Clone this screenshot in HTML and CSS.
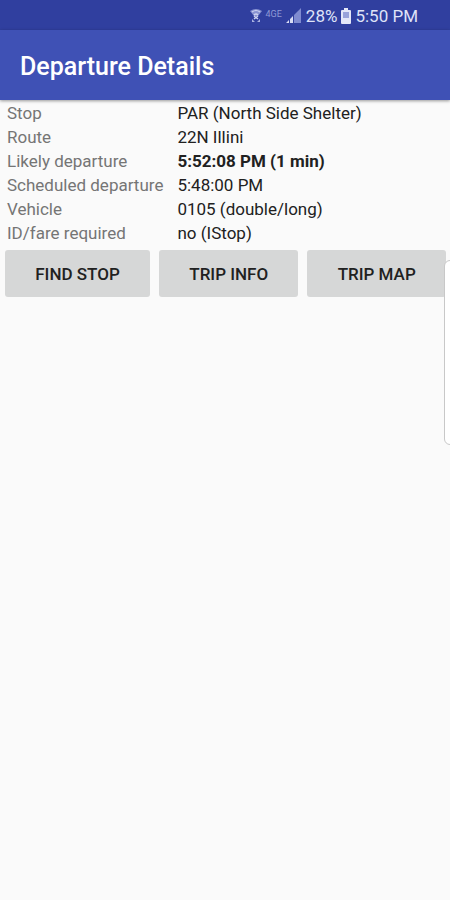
FILE: index.html
```
<!DOCTYPE html>
<html lang="en">
<head>
  <meta charset="UTF-8" />
  <meta name="viewport" content="width=device-width, initial-scale=1" />
  <title>Departure Details</title>
  <link rel="stylesheet" href="styles.css">
</head>
<body>

  <div class="status-bar">
    <svg class="wifi-icon" width="12" height="16" viewBox="0 0 12 16">
      <path d="M0 3 Q6 -1 12 3 L8 8 H4 Z" fill="#8893d2" />
      <path d="M2 4 Q6 1 10 4 M4 7 Q6 5 8 7" fill="none" stroke="#cdd2f0" stroke-width="1.2" />
      <path d="M4 8 L8 11 M8 8 L4 11" fill="none" stroke="#cdd2f0" stroke-width="1.4" />
      <path d="M2 11 V14 H5 Z M10 11 V14 H7 Z" fill="#a9b1e0" />
    </svg>
    <span class="network">4GE</span>
    <svg class="signal-icon" width="16" height="16" viewBox="0 0 16 16">
      <path d="M12 3 L15 0 V15 H12 Z M8 7 L12 3 V15 H8 Z" fill="#7f8bd0" />
      <path d="M4 11 L7 8 V15 H4 Z M0 15 L3 12 V15 Z" fill="#d8dcf4" />
    </svg>
    <span class="percent">28%</span>
    <svg class="battery-icon" width="10" height="16" viewBox="0 0 10 16">
      <path d="M3 0 H7 V2 H9 Q10 2 10 3 V15 Q10 16 9 16 H1 Q0 16 0 15 V3 Q0 2 1 2 H3 Z" fill="#e4e7f8" />
      <rect x="2" y="4" width="6" height="6" fill="#99a3da" />
    </svg>
    <span class="clock">5:50 PM</span>
  </div>

  <header class="app-bar">
    <h1 class="title">Departure Details</h1>
  </header>

  <main class="content">
    <table class="details">
      <tr><th scope="row">Stop</th><td>PAR (North Side Shelter)</td></tr>
      <tr><th scope="row">Route</th><td>22N Illini</td></tr>
      <tr><th scope="row">Likely departure</th><td class="likely">5:52:08 PM (1 min)</td></tr>
      <tr><th scope="row">Scheduled departure</th><td>5:48:00 PM</td></tr>
      <tr><th scope="row">Vehicle</th><td>0105 (double/long)</td></tr>
      <tr><th scope="row">ID/fare required</th><td>no (IStop)</td></tr>
    </table>

    <div class="actions">
      <button type="button">Find Stop</button>
      <button type="button">Trip Info</button>
      <button type="button">Trip Map</button>
    </div>
  </main>

  <!-- edge panel handle, hangs off the right side -->
  <div class="edge-handle"></div>

</body>
</html>
```

FILE: styles.css
```
html, body {
  margin: 0;
  padding: 0;
}

body {
  position: relative;
  min-height: 100vh;
  overflow-x: hidden;
  font-family: Roboto, sans-serif;
  font-size: 17px;
  background-color: #fafafa;
  color: #212121;
}

.status-bar {
  display: flex;
  align-items: center;
  justify-content: flex-end;
  height: 30px;
  padding: 2px 32px 0 0;
  box-sizing: border-box;
  background: #303f9f;
  color: #dfe3f8;
}

.network {
  margin: 0 4px 4px;
  font-size: 9px;
  color: #8f9ad6;
}

.percent {
  margin: 0 4px;
}

.clock {
  margin-left: 4px;
}

.app-bar {
  display: flex;
  align-items: center;
  height: 70px;
  padding: 2px 20px 0;
  box-sizing: border-box;
  background: #3f51b5;
  box-shadow: 0 1px 3px rgba(0, 0, 0, 0.4);
}

.title {
  margin: 0;
  font-size: 25px;
  font-weight: 500;
  color: #fff;
}

.content {
  padding: 1px 4px 0 5px;
}

.details {
  border-collapse: collapse;
  line-height: 24px;
}

.details th {
  padding: 0 14px 0 2px;
  font-weight: 400;
  text-align: left;
  color: #757575;
}

.details td {
  padding: 0;
}

.details .likely {
  font-weight: 700;
}

.actions {
  display: flex;
  gap: 9px;
  margin-top: 5px;
}

.actions button {
  flex: 1 1 auto;
  height: 47px;
  padding: 0;
  border: 0;
  border-radius: 3px;
  background: #d6d7d7;
  font-family: inherit;
  font-size: 17px;
  font-weight: 500;
  text-transform: uppercase;
  color: #212121;
}

.edge-handle {
  position: absolute;
  top: 260px;
  right: -6px;
  width: 12px;
  height: 185px;
  box-sizing: border-box;
  border: 1px solid #c8c8c8;
  border-radius: 8px;
  background: #fff;
}
```
